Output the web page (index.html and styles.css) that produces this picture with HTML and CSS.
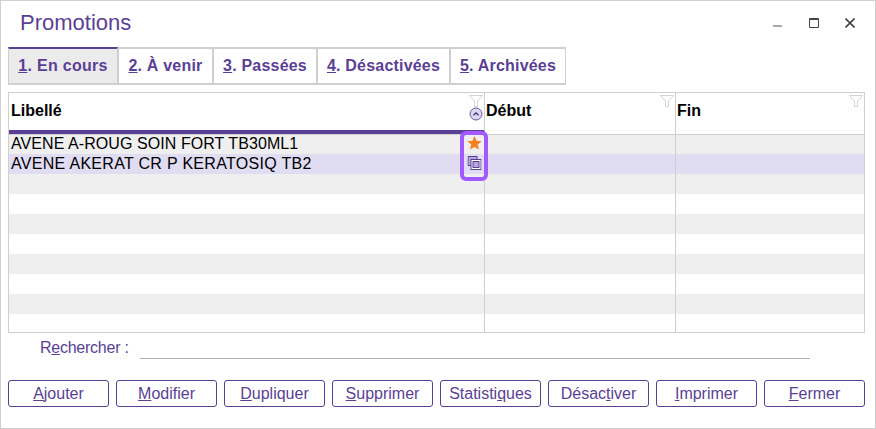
FILE: index.html
```html
<!DOCTYPE html>
<html lang="fr">
<head>
<meta charset="utf-8">
<title>Promotions</title>
<link rel="stylesheet" href="styles.css">
</head>
<body>
<div class="window">
  <header class="titlebar">
    <h1 class="title">Promotions</h1>
    <div class="controls">
      <svg class="ctl" width="10" height="10" viewBox="0 0 10 10"><rect x="0" y="7" width="9" height="2" fill="#aaa"/></svg>
      <svg class="ctl" width="10" height="10" viewBox="0 0 10 10"><path d="M.5.5h9v9h-9z M0 1.5h10" fill="none" stroke="#444" stroke-width="1"/></svg>
      <svg class="ctl" width="10" height="10" viewBox="0 0 10 10"><path d="M.5.5l9 9M9.5.5l-9 9" fill="none" stroke="#444" stroke-width="1.6"/></svg>
    </div>
  </header>
  <nav class="tabs">
    <a class="tab tab-active t1"><u>1</u>. En cours</a>
    <a class="tab t2"><u>2</u>. À venir</a>
    <a class="tab t3"><u>3</u>. Passées</a>
    <a class="tab t4"><u>4</u>. Désactivées</a>
    <a class="tab t5"><u>5</u>. Archivées</a>
  </nav>
  <section class="grid">
    <div class="head">
      <div class="hcell hcell-sorted">Libellé
        <svg class="funnel" width="14" height="12" viewBox="0 0 14 12"><path d="M.5.5h13L8.500 6v5.500h-3V6z" fill="#fff" stroke="#d4d4d4"/></svg>
        <svg class="sort" width="14" height="14" viewBox="0 0 14 14"><circle cx="7" cy="7" r="6" fill="#dcd7f0" stroke="#6a55a6" stroke-width="1"/><path d="M4.500 8.200L7 5.800l2.500 2.400" fill="none" stroke="#3d2c6b" stroke-width="1.200"/></svg>
      </div>
      <div class="hcell">Début
        <svg class="funnel" width="14" height="12" viewBox="0 0 14 12"><path d="M.5.5h13L8.500 6v5.500h-3V6z" fill="#fff" stroke="#d4d4d4"/></svg>
      </div>
      <div class="hcell">Fin
        <svg class="funnel" width="14" height="12" viewBox="0 0 14 12"><path d="M.5.5h13L8.500 6v5.500h-3V6z" fill="#fff" stroke="#d4d4d4"/></svg>
      </div>
    </div>
    <div class="body">
      <div class="row row-alt row-first"><div class="cell text-a">AVENE A-ROUG SOIN FORT TB30ML1</div><div class="cell"></div><div class="cell"></div></div>
      <div class="row row-sel"><div class="cell text-b">AVENE AKERAT CR P KERATOSIQ TB2</div><div class="cell"></div><div class="cell"></div></div>
      <div class="row row-alt"><div class="cell"></div><div class="cell"></div><div class="cell"></div></div>
      <div class="row"><div class="cell"></div><div class="cell"></div><div class="cell"></div></div>
      <div class="row row-alt"><div class="cell"></div><div class="cell"></div><div class="cell"></div></div>
      <div class="row"><div class="cell"></div><div class="cell"></div><div class="cell"></div></div>
      <div class="row row-alt"><div class="cell"></div><div class="cell"></div><div class="cell"></div></div>
      <div class="row"><div class="cell"></div><div class="cell"></div><div class="cell"></div></div>
      <div class="row row-alt"><div class="cell"></div><div class="cell"></div><div class="cell"></div></div>
      <div class="row row-last"><div class="cell"></div><div class="cell"></div><div class="cell"></div></div>
      <div class="highlight">
        <svg width="15" height="14" viewBox="0 0 16 15"><path d="M8 0l2.200 5 5.500.5-4.200 3.600 1.300 5.400L8 11.700l-4.800 2.800 1.300-5.400L.3 5.500 5.800 5z" fill="#f58220"/></svg>
        <svg class="icon-copy" width="14" height="14" viewBox="0 0 14 14"><rect x=".5" y=".5" width="9" height="9" fill="#b6a8dc" stroke="#5b3f94"/><rect x="3.500" y="3.500" width="10" height="10" fill="#fff" stroke="#5b3f94"/><rect x="5.500" y="5.500" width="6" height="6" fill="#b6a8dc" stroke="#5b3f94"/></svg>
      </div>
    </div>
  </section>
  <div class="search">
    <label class="search-label">R<u>e</u>chercher :</label>
    <div class="search-input"></div>
  </div>
  <footer class="buttons">
    <button class="btn"><u>A</u>jouter</button>
    <button class="btn"><u>M</u>odifier</button>
    <button class="btn"><u>D</u>upliquer</button>
    <button class="btn"><u>S</u>upprimer</button>
    <button class="btn">Statisti<u>q</u>ues</button>
    <button class="btn">Désac<u>t</u>iver</button>
    <button class="btn"><u>I</u>mprimer</button>
    <button class="btn"><u>F</u>ermer</button>
  </footer>
</div>
</body>
</html>
```
FILE: styles.css
```css
* { box-sizing: border-box; }
html, body { margin: 0; padding: 0; background: #fff; }
body { width: 876px; height: 429px; overflow: hidden; font-family: "Liberation Sans", Arial, sans-serif; }
.window { width: 876px; height: 429px; border: 1px solid #cfcfcf; padding: 0 10px 0 7px; display: flex; flex-direction: column; }
.titlebar { height: 46px; display: flex; align-items: flex-start; justify-content: space-between; }
.title { margin: 9px 0 0 12px; font-size: 22px; line-height: 26px; font-weight: 400; color: #5b3f94; }
.controls { display: flex; gap: 26px; margin: 17px 10px 0 0; }
.ctl { display: block; }
.tabs { display: flex; height: 38px; }
.tab { height: 38px; border: 2px solid #cfcfcf; border-left-width: 1px; border-right-width: 1px; padding-top: 8px; text-align: center; font-size: 16px; letter-spacing: .2px; line-height: 18px; font-weight: 700; color: #5b3f94; }
.tab-active { background: #ebebeb; border-top-color: #5b3f94; border-left-width: 1px; }
.t1 { width: 110px; letter-spacing: .3px; }
.t2 { width: 95px; }
.t3 { width: 104px; }
.t4 { width: 133px; }
.t5 { width: 116px; }
.grid { margin-top: 7px; width: 857px; height: 241px; border: 1px solid #cfcfcf; display: flex; flex-direction: column; }
.head { display: grid; grid-template-columns: 476px 191px 1fr; height: 42px; border-bottom: 1px solid #cfcfcf; }
.hcell { position: relative; border-right: 1px solid #cfcfcf; padding: 8px 0 0 1px; font-size: 16px; line-height: 20px; font-weight: 700; color: #000; }
.hcell:last-child { border-right: 0; }
.hcell-sorted { border-bottom: 4px solid #5b3f94; height: 41px; padding-left: 2px; }
.funnel { position: absolute; top: 2px; right: 1px; }
.sort { position: absolute; top: 14px; right: 1px; }
.body { position: relative; flex: 1; display: flex; flex-direction: column; }
.row { display: grid; grid-template-columns: 476px 191px 1fr; height: 20px; flex: none; }
.row-alt { background: #efefef; }
.row-sel { background: #e0dcf2; }
.row-first { height: 19px; }
.row-last { height: 18px; }
.cell { border-right: 1px solid #cfcfcf; padding-left: 2px; font-size: 16px; line-height: 20px; color: #000; white-space: nowrap; }
.cell:last-child { border-right: 0; }
.text-a { line-height: 18px; letter-spacing: .07px; }
.text-b { letter-spacing: .3px; }
.highlight { position: absolute; left: 451px; top: -4px; width: 28px; height: 50px; border: 4px solid #a259ff; border-radius: 6px; display: flex; flex-direction: column; align-items: center; padding-top: 1px; gap: 6px; }
.highlight svg { display: block; flex: none; }
.highlight .icon-copy { transform: translateX(.5px); }
.search { display: flex; align-items: flex-end; height: 26px; }
.search-label { margin-left: 32px; width: 100px; font-size: 16px; letter-spacing: -.25px; line-height: 20px; color: #5b3f94; padding-bottom: 1px; white-space: nowrap; }
.search-input { width: 670px; height: 1px; background: #aeb0b3; }
.buttons { display: flex; gap: 7px; margin-top: 21px; }
.btn { width: 101px; height: 27px; padding: 0; background: #fff; border: 1px solid #5b3f94; border-radius: 3px; font-family: inherit; font-size: 16px; color: #5b3f94; }
```
